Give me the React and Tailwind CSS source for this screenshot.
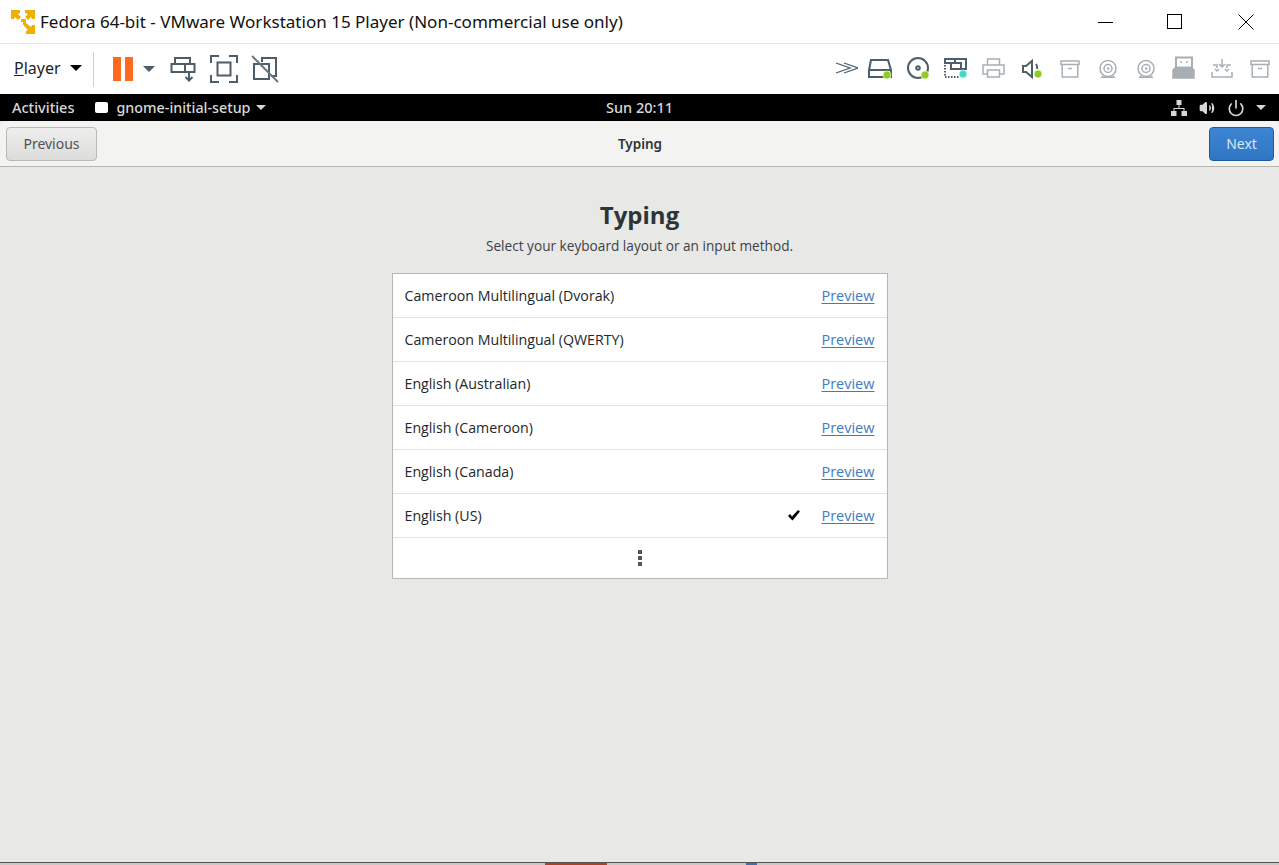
import { Volume2, Power } from 'lucide-react';

const layouts = [
  { name: 'Cameroon Multilingual (Dvorak)' },
  { name: 'Cameroon Multilingual (QWERTY)' },
  { name: 'English (Australian)' },
  { name: 'English (Cameroon)' },
  { name: 'English (Canada)' },
  { name: 'English (US)', selected: true },
];

function Logo() {
  return (
    <svg width="24" height="24" viewBox="0 0 24 24" className="shrink-0">
      <g fill="#f0b000">
        <path d="M0 0h9v3l-2 1 3 3-3 3-3-3-1 2H0z" />
        <path d="M14 0h10v9h-3l-1-2-3 3-3-3 3-3-3-1z" />
        <path d="M10 9h5v6h-3v-3h-2z" />
        <path d="M15 13l5 4 1-2h3v9h-9v-3l2-1-4-4 1-3z" />
      </g>
    </svg>
  );
}

function Dot({ color, x, y }) {
  return <circle cx={x} cy={y} r="4" fill={color} stroke="#fff" strokeWidth="0.6" />;
}

function ToolIcon({ children, w = 26, h = 26, sw = 1.5 }) {
  return (
    <svg width={w} height={h} viewBox={`0 0 ${w} ${h}`} fill="none" stroke="#4d5d69" strokeWidth={sw} className="shrink-0">
      {children}
    </svg>
  );
}

function ArchiveIcon() {
  return (
    <ToolIcon>
      <g stroke="#a8afb4">
        <path d="M5 5h18v3.500H5zM6.200 8.500V21h15.600V8.500M12 12.500h4" />
      </g>
    </ToolIcon>
  );
}

function CameraIcon() {
  return (
    <ToolIcon>
      <g stroke="#a8afb4">
        <circle cx="14" cy="12.500" r="8" />
        <circle cx="14" cy="12.500" r="4" />
        <path d="M14 11v2h1.500M9 20l-1 1.200h12L19 20" />
      </g>
    </ToolIcon>
  );
}

function LayoutRow({ name, selected }) {
  return (
    <div className="flex h-11 items-center border-b border-[#e3e3e2] pl-3 pr-3">
      <span className="flex-1 text-[14.2px] text-[#22282a]">{name}</span>
      {selected && (
        <svg width="12" height="11" viewBox="0 0 12 11" className="mr-[21px]">
          <path d="M0 6l2-2 2 2.500L10 0l2 1.500L4.500 10.500z" fill="#000" />
        </svg>
      )}
      <a className="text-[14.5px] text-[#3e7bc2] underline underline-offset-2">Preview</a>
    </div>
  );
}

export default function App() {
  return (
    <div className="flex h-[865px] w-[1279px] flex-col overflow-hidden bg-white font-['Open_Sans','Noto_Sans',sans-serif]">
      {/* barra de titulo */}
      <div className="flex h-11 shrink-0 items-center border-b border-[#e5e5e5] pl-[11px]">
        <Logo />
        <span className="ml-[5px] font-['Noto_Sans',sans-serif] text-[17.050px] text-[#111]">
          Fedora 64-bit - VMware Workstation 15 Player (Non-commercial use only)
        </span>
        <div className="ml-auto flex items-center">
          <svg width="16" height="16" viewBox="0 0 16 16" className="mr-[53px]"><path d="M0 8.500h15" stroke="#000" /></svg>
          <svg width="16" height="16" viewBox="0 0 16 16" className="mr-[55px]"><rect x="0.500" y="0.500" width="14" height="14" fill="none" stroke="#000" /></svg>
          <svg width="16" height="16" viewBox="0 0 16 16" className="mr-[25px]"><path d="M.5.5l15 15M15.5.5l-15 15" stroke="#000" /></svg>
        </div>
      </div>

      {/* toolbar */}
      <div className="flex h-[50px] shrink-0 items-center pl-[14px]">
        <span className="mb-[2px] font-['Noto_Sans',sans-serif] text-[16px] text-[#222]"><span className="underline">P</span>layer</span>
        <span className="mb-[3px] ml-[9px] h-0 w-0 border-x-[6px] border-t-[6px] border-x-transparent border-t-black" />
        <div className="ml-[11px] h-[35px] w-px bg-[#cfcfcf]" />
        <div className="ml-[19px] flex h-6 gap-[4px]">
          <div className="w-2 bg-[#ff6a1f]" />
          <div className="w-2 bg-[#ff6a1f]" />
        </div>
        <span className="ml-[10px] h-0 w-0 border-x-[6px] border-t-[6px] border-x-transparent border-t-[#4d5d69]" />
        <div className="ml-[15px] flex items-center">
          <ToolIcon w={26} h={26} sw={2}>
            <path d="M5 2h15v6H5zM1.500 8h23v8h-23zM15 8v8M19 16v8M15.500 21l3.500 3.500 3.500-3.500" />
          </ToolIcon>
          <div className="w-[14px]" />
          <ToolIcon w={28} h={28} sw={2}>
            <path d="M1 8V1h8M19 1h8v7M27 20v7h-8M9 27H1v-7" />
            <rect x="7.500" y="7.500" width="13" height="13" />
          </ToolIcon>
          <div className="w-[13px]" />
          <ToolIcon w={28} h={28} sw={2}>
            <path d="M11 7V3h14v18h-5M3 9h15v15H3z" />
            <path d="M1 1l26 26" stroke="#6b7983" />
          </ToolIcon>
        </div>
        <div className="ml-auto mr-[7px] flex items-center gap-[12px]">
          <div className="-mr-[4px]">
            <ToolIcon w={30} sw={1.3}>
              <path d="M8 7l14 5-14 5M16 7l14 5-14 5" />
            </ToolIcon>
          </div>
          <ToolIcon sw={2}>
            <path d="M3 14l2-10h17l3 10v7H3zM3 14h22" />
            <Dot color="#8fce1e" x="21" y="19" />
          </ToolIcon>
          <ToolIcon sw={2}>
            <circle cx="14" cy="12" r="10" />
            <circle cx="14" cy="12" r="1.800" />
            <Dot color="#8fce1e" x="21" y="19" />
          </ToolIcon>
          <ToolIcon sw={2}>
            <path d="M3 3h10v4H3zM9 7h10v6H9zM13 7V3h11v10h-5" />
            <path d="M3 9v12h14" strokeDasharray="1.500 1.500" />
            <Dot color="#3fdcc8" x="21" y="18" />
          </ToolIcon>
          <ToolIcon>
            <g stroke="#a8afb4">
              <path d="M7.500 9V3h12v6M7.500 18H3V9h21v9h-4.500M7.500 14h12v7h-12z" />
            </g>
          </ToolIcon>
          <ToolIcon sw={2}>
            <path d="M5 10h3l6-5v16l-6-5H5zM18 8c1.500 2 1.500 3 1 5" />
            <Dot color="#8fce1e" x="20" y="18" />
          </ToolIcon>
          <ArchiveIcon />
          <CameraIcon />
          <CameraIcon />
          <ToolIcon>
            <path d="M6 1.500h16v10H6z" stroke="#a8afb4" strokeWidth="2" />
            <path d="M11 5v2M17 5v2" stroke="#a8afb4" />
            <path d="M5 12h17l2 2v8H3v-8z" fill="#a8afb4" stroke="#a8afb4" />
          </ToolIcon>
          <ToolIcon>
            <g stroke="#a8afb4">
              <path d="M14 3v8M11 8l3 3 3-3M5 9h4v3M23 9h-4v3M7 13l2 2 2-2M17 13l2 2 2-2M4 16v5h20v-5" />
            </g>
          </ToolIcon>
          <ArchiveIcon />
        </div>
      </div>

      {/* painel gnome */}
      <div className="relative flex h-[27px] shrink-0 items-center bg-black font-['Noto_Sans',sans-serif] text-[14.500px] font-medium text-[#d8d8d8]">
        <span className="ml-3">Activities</span>
        <span className="ml-[21px] h-[11px] w-[13px] rounded-[2px] bg-white" />
        <span className="ml-2 text-[14.300px]">gnome-initial-setup</span>
        <span className="ml-[5px] h-0 w-0 border-x-[5px] border-t-[5px] border-x-transparent border-t-[#d8d8d8]" />
        <span className="absolute left-[606px]">Sun 20:11</span>
        <div className="ml-auto flex items-center">
          <svg width="16" height="16" viewBox="0 0 16 16" fill="#d8d8d8" className="mr-[12px]">
            <path d="M5.500 0h5v5h-5zM0 11h5.500v5H0zM10.500 11H16v5h-5.500zM7.500 5h1v3h5v3h-1V9H3.500v2h-1V8h5z" />
          </svg>
          <Volume2 size={16} fill="#d8d8d8" stroke="#d8d8d8" className="mr-[12px]" />
          <Power size={18} stroke="#d8d8d8" strokeWidth={2.2} className="mr-[11px]" />
          <span className="mr-[13px] h-0 w-0 border-x-[5px] border-t-[5px] border-x-transparent border-t-[#d8d8d8]" />
        </div>
      </div>

      {/* janela */}
      <div className="flex min-h-0 flex-1 flex-col bg-[#e8e8e7]">
        <div className="flex h-[46px] shrink-0 items-start rounded-t-[6px] border-b border-[#b6b6b3] bg-[#f3f3f2] px-[6px] pt-[6px] font-['Noto_Sans',sans-serif]">
          <div className="flex-1">
            <button className="h-[34px] w-[91px] rounded-[4px] border border-[#b8b8b5] bg-gradient-to-b from-[#eeeeed] to-[#dcdcda] pb-[2px] text-[14px] text-[#4d5356]">Previous</button>
          </div>
          <span className="self-center pb-[4px] text-[13.500px] font-semibold text-[#2e3436]">Typing</span>
          <div className="-mr-px flex flex-1 justify-end">
            <button className="h-[34px] w-[65px] rounded-[4px] border border-[#1f5a9e] bg-gradient-to-b from-[#3d86d4] to-[#2f75c4] pb-[2px] text-[14px] text-[#dce8f5]">Next</button>
          </div>
        </div>

        <div className="flex flex-1 flex-col items-center pt-[31px]">
          <h1 className="text-[24px] font-bold leading-[33px] text-[#2e3436]">Typing</h1>
          <p className="mt-[5px] text-[13.650px] leading-5 text-[#3c4244]">Select your keyboard layout or an input method.</p>
          <div className="mt-[17px] w-[496px] border border-[#b6b6b3] bg-white">
            {layouts.map((l) => (
              <LayoutRow key={l.name} name={l.name} selected={l.selected} />
            ))}
            <div className="flex h-10 flex-col items-center justify-center gap-[2px]">
              <span className="h-[4px] w-[4px] bg-[#555]" />
              <span className="h-[4px] w-[4px] bg-[#555]" />
              <span className="h-[4px] w-[4px] bg-[#555]" />
            </div>
          </div>
        </div>
      </div>

      {/* fundo atras da VM */}
      <div className="flex h-[3px] shrink-0 overflow-hidden border-t border-[#555] bg-[#c9c9c7]">
        <span className="ml-[22px] w-[523px] font-['Noto_Sans',sans-serif] text-[15px] leading-[15px] text-[#333]">New Virtual Machine Wizard</span>
        <div className="w-[62px] bg-[#b04020]" />
        <div className="ml-[139px] w-[11px] bg-[#3a70b0]" />
      </div>
    </div>
  );
}
